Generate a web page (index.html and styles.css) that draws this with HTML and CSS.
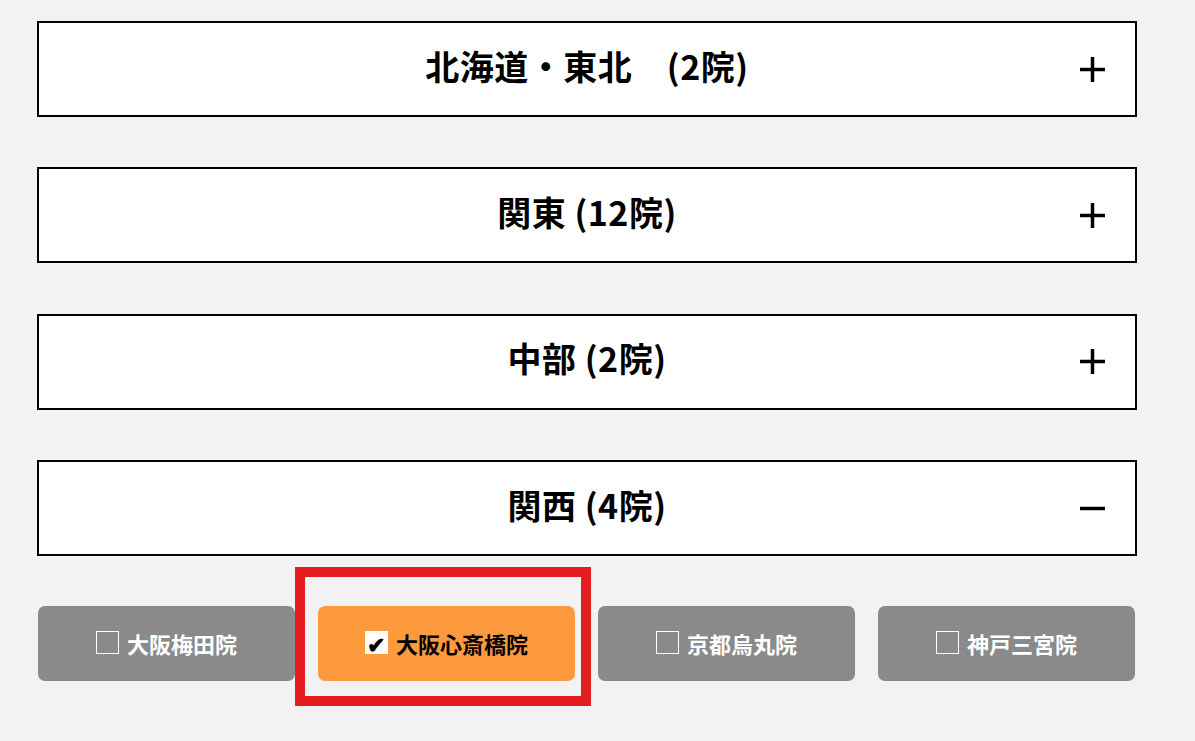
FILE: index.html
```html
<!DOCTYPE html>
<html lang="ja">
<head>
    <meta charset="utf-8">
    <title>院一覧</title>
    <link rel="stylesheet" href="styles.css">
</head>
<body>
    <div class="area-list">
        <div class="area">
            <div class="area-head">
                <span class="area-name">北海道・東北　(2院)</span>
                <svg class="toggle" viewBox="0 0 25 25"><path d="M0 12.5H25M12.5 0V25"/></svg>
            </div>
        </div>

        <div class="area">
            <div class="area-head">
                <span class="area-name">関東 (12院)</span>
                <svg class="toggle" viewBox="0 0 25 25"><path d="M0 12.5H25M12.5 0V25"/></svg>
            </div>
        </div>

        <div class="area">
            <div class="area-head">
                <span class="area-name">中部 (2院)</span>
                <svg class="toggle" viewBox="0 0 25 25"><path d="M0 12.5H25M12.5 0V25"/></svg>
            </div>
        </div>

        <div class="area open">
            <div class="area-head">
                <span class="area-name">関西 (4院)</span>
                <svg class="toggle" viewBox="0 0 25 25"><path d="M0 12.5H25"/></svg>
            </div>
            <div class="clinics">
                <div class="clinic"><span class="check"></span>大阪梅田院</div>
                <div class="clinic selected marked"><span class="check">✔</span>大阪心斎橋院</div>
                <div class="clinic"><span class="check"></span>京都烏丸院</div>
                <div class="clinic"><span class="check"></span>神戸三宮院</div>
            </div>
        </div>
    </div>
</body>
</html>
```

FILE: styles.css
```css
body { margin: 0; background: #f2f2f2; font-family: "Noto Sans CJK JP", "Noto Sans", sans-serif; color: #000; }
.area-list { width: 1100px; margin-left: 37px; padding-top: 21px; }
.area { margin-bottom: 50.4px; }
.area-head { height: 96px; box-sizing: border-box; border: 2px solid #000; background: #fff; display: grid; grid-template-columns: 1fr auto 1fr; align-items: center; }
.area-name { grid-column: 2; font-size: 34px; font-weight: 700; line-height: 1; letter-spacing: 0.5px; padding-bottom: 7px; }
.toggle { grid-column: 3; justify-self: end; width: 25px; height: 25px; margin-right: 30px; }
.toggle path { stroke: #000; stroke-width: 3.5; fill: none; }
.clinics { display: grid; grid-template-columns: repeat(4, 257px); gap: 23px; margin-top: 50px; margin-left: 1px; }
.clinic { position: relative; height: 75px; box-sizing: border-box; padding-bottom: 2px; border-radius: 7px; background: #8a8a8a; color: #fff; font-size: 22px; font-weight: 700; display: flex; align-items: center; justify-content: center; gap: 8px; }
.check { width: 23px; height: 23px; box-sizing: border-box; border: 1px solid #fff; display: flex; align-items: center; justify-content: center; font-size: 22px; line-height: 1; }
.clinic.selected { background: #fe9a3e; color: #000; }
.clinic.selected .check { background: #fff; color: #000; }
.clinic.marked::after { content: ""; position: absolute; top: -39px; left: -23px; right: -16px; bottom: -25px; border: 10px solid #e41d1f; }
```
